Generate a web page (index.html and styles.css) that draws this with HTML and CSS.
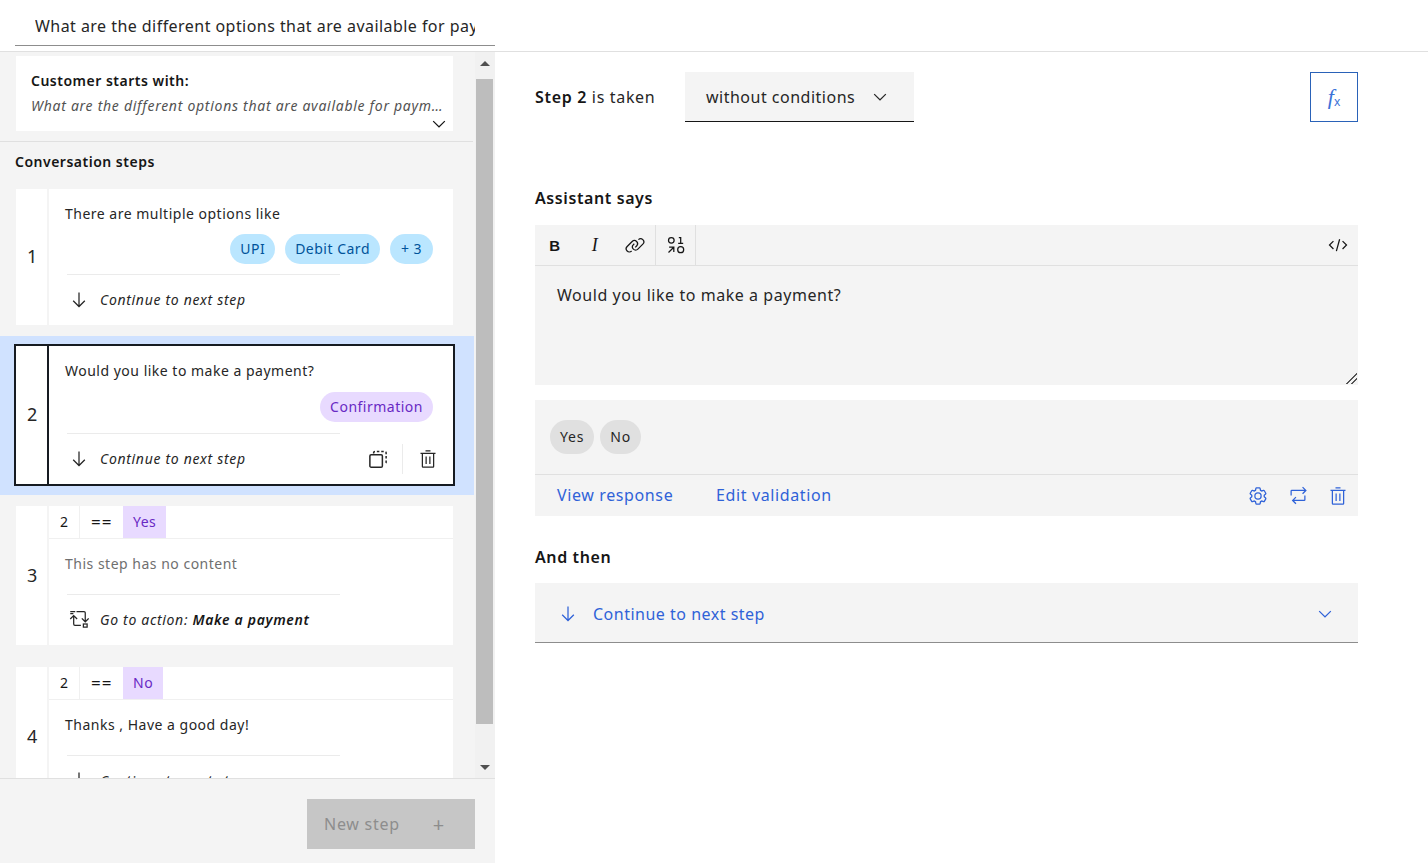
FILE: index.html
```html
<!DOCTYPE html>
<html lang="en">
<head>
<meta charset="UTF-8">
<meta name="viewport" content="width=device-width, initial-scale=1.0">
<title>Action editor</title>
<link rel="stylesheet" href="styles.css">
</head>
<body>

<svg class="icon-defs" xmlns="http://www.w3.org/2000/svg">
    <symbol id="i-arrow" viewBox="0 0 32 32"><path d="M24.59 16.59L17 24.17V4h-2v20.17l-7.59-7.58L6 18l10 10 10-10z"/></symbol>
    <symbol id="i-chevron" viewBox="0 0 32 32"><path d="M16 22L6 12l1.4-1.4 8.6 8.6 8.6-8.6L26 12z"/></symbol>
    <symbol id="i-trash" viewBox="0 0 32 32"><path d="M12 12h2v12h-2zM18 12h2v12h-2z"/><path d="M4 6v2h2v20a2 2 0 002 2h16a2 2 0 002-2V8h2V6zm4 22V8h16v20zM12 2h8v2h-8z"/></symbol>
    <symbol id="i-copy" viewBox="0 0 32 32">
        <rect x="3" y="9" width="20" height="20" rx="2" fill="none" stroke="currentColor" stroke-width="2.4"/>
        <path d="M9 7V6a2 2 0 012-2h16a2 2 0 012 2v15a2 2 0 01-2 2h-1" fill="none" stroke="currentColor" stroke-width="2.4" stroke-dasharray="4 3"/>
    </symbol>
    <symbol id="i-goto" viewBox="0 0 32 32">
        <g fill="none" stroke="currentColor" stroke-width="2">
            <path d="M2 4h8M2 7.500h5"/>
            <path d="M12 4h12a2 2 0 012 2v14M20.500 15l5.500 5.500 5.500-5.500"/>
            <path d="M7.500 10.500V24a2 2 0 002 2H19M2 16l5.500-5.500L13 16"/>
            <rect x="23" y="24" width="6" height="5"/>
        </g>
    </symbol>
    <symbol id="i-link" viewBox="0 0 32 32"><path d="M29.25 6.76a6 6 0 00-8.5 0l1.42 1.42a4 4 0 115.67 5.67l-8 8a4 4 0 11-5.67-5.66l1.41-1.42-1.41-1.42-1.42 1.42a6 6 0 000 8.5A6 6 0 0017 25a6 6 0 004.27-1.76l8-8a6 6 0 00-.02-8.48z"/><path d="M4.19 24.82a4 4 0 010-5.67l8-8a4 4 0 015.67 0A3.94 3.94 0 0119 14a4 4 0 01-1.17 2.85L15.71 19l1.42 1.42 2.12-2.12a6 6 0 00-8.51-8.51l-8 8a6 6 0 000 8.51A6 6 0 007 28a6.07 6.07 0 004.28-1.76l-1.42-1.42a4 4 0 01-5.67 0z"/></symbol>
    <symbol id="i-vars" viewBox="0 0 32 32">
        <g fill="none" stroke="currentColor" stroke-width="2">
            <circle cx="8.500" cy="8.500" r="4.500"/>
            <circle cx="23.500" cy="23.500" r="4.800"/>
            <path d="M19.500 13.500h8M23.500 13.500V4h-3"/>
            <path d="M4 28l8-8M5 19.500h7.500V27"/>
        </g>
    </symbol>
    <symbol id="i-code" viewBox="0 0 32 32"><path d="M31 16l-7 7-1.410-1.410L28.170 16l-5.580-5.590L24 9zM1 16l7-7 1.410 1.410L3.830 16l5.580 5.590L8 23zM12.420 25.480l5.220-18.930 1.930.53-5.220 18.940z"/></symbol>
    <symbol id="i-settings" viewBox="0 0 32 32"><path d="M27 16.760v-1.530l1.920-1.680A2 2 0 0029.300 11l-2.360-4a2 2 0 00-1.730-1 2 2 0 00-.64.100l-2.430.820a11.350 11.350 0 00-1.310-.750l-.510-2.520a2 2 0 00-2-1.610h-4.680a2 2 0 00-2 1.610l-.510 2.520a11.480 11.480 0 00-1.320.750L7.430 6.060A2 2 0 006.790 6a2 2 0 00-1.730 1L2.700 11a2 2 0 00.410 2.510L5 15.240v1.530l-1.890 1.680A2 2 0 002.700 21l2.360 4a2 2 0 001.730 1 2 2 0 00.640-.100l2.430-.820a11.350 11.350 0 001.310.750l.510 2.520a2 2 0 002 1.610h4.720a2 2 0 002-1.610l.510-2.520a11.480 11.480 0 001.320-.750l2.420.820a2 2 0 00.640.100 2 2 0 001.730-1l2.280-4a2 2 0 00-.410-2.510zM25.210 24l-3.430-1.160a8.860 8.860 0 01-2.710 1.570L18.360 28h-4.720l-.71-3.550a9.360 9.360 0 01-2.700-1.570L6.790 24l-2.360-4 2.720-2.400a8.900 8.900 0 010-3.130L4.430 12l2.360-4 3.430 1.160a8.860 8.860 0 012.710-1.570L13.640 4h4.720l.71 3.550a9.360 9.360 0 012.700 1.570L25.210 8l2.360 4-2.720 2.400a8.900 8.900 0 010 3.130L27.570 20z"/><path d="M16 22a6 6 0 116-6 5.940 5.940 0 01-6 6zm0-10a3.910 3.910 0 00-4 4 3.910 3.910 0 004 4 3.910 3.910 0 004-4 3.910 3.910 0 00-4-4z"/></symbol>
    <symbol id="i-repeat" viewBox="0 0 32 32"><path d="M6 6h20.170l-3.580-3.590L24 1l6 6-6 6-1.410-1.410L26.170 8H6v7H4V8a2 2 0 012-2z"/><path d="M9.830 24l3.580 3.590L12 29l-6-6 6-6 1.410 1.410L9.830 22H26v-7h2v7a2 2 0 01-2 2z"/></symbol>
</svg>

<div class="top-bar">
    <input class="title-input" type="text" value="What are the different options that are available for payment?" readonly>
</div>

<div class="page">
    <div class="left-panel">
        <div class="left-scroll">
            <div class="step-list">
                <div class="start-card">
                    <div class="start-title">Customer starts with:</div>
                    <div class="start-text">What are the different options that are available for payment?</div>
                    <svg class="icon start-chevron"><use href="#i-chevron"/></svg>
                </div>
                <h3 class="list-title">Conversation steps</h3>

                <div class="step step-first">
                    <div class="step-num">1</div>
                    <div class="step-body">
                        <p class="step-text">There are multiple options like</p>
                        <div class="chips">
                            <span class="chip chip-blue">UPI</span>
                            <span class="chip chip-blue">Debit Card</span>
                            <span class="chip chip-blue">+ 3</span>
                        </div>
                        <div class="step-action">
                            <svg class="icon"><use href="#i-arrow"/></svg>
                            <span>Continue to next step</span>
                        </div>
                    </div>
                </div>

                <div class="step-selected">
                    <div class="step">
                        <div class="step-num">2</div>
                        <div class="step-body">
                            <p class="step-text">Would you like to make a payment?</p>
                            <div class="chips">
                                <span class="chip chip-purple">Confirmation</span>
                            </div>
                            <div class="step-action">
                                <svg class="icon"><use href="#i-arrow"/></svg>
                                <span>Continue to next step</span>
                                <div class="step-tools">
                                    <svg class="icon"><use href="#i-copy"/></svg>
                                    <svg class="icon"><use href="#i-trash"/></svg>
                                </div>
                            </div>
                        </div>
                    </div>
                </div>

                <div class="step step-cond">
                    <div class="step-num">3</div>
                    <div class="step-body">
                        <div class="cond-row">
                            <span class="cond-ref">2</span>
                            <span class="cond-op">==</span>
                            <span class="cond-val">Yes</span>
                        </div>
                        <p class="step-text step-empty">This step has no content</p>
                        <div class="step-action">
                            <svg class="icon"><use href="#i-goto"/></svg>
                            <span>Go to action: <b>Make a payment</b></span>
                        </div>
                    </div>
                </div>

                <div class="step step-cond">
                    <div class="step-num">4</div>
                    <div class="step-body">
                        <div class="cond-row">
                            <span class="cond-ref">2</span>
                            <span class="cond-op">==</span>
                            <span class="cond-val">No</span>
                        </div>
                        <p class="step-text">Thanks , Have a good day!</p>
                        <div class="step-action">
                            <svg class="icon"><use href="#i-arrow"/></svg>
                            <span>Continue to next step</span>
                        </div>
                    </div>
                </div>
            </div>

            <div class="scrollbar">
                <div class="scroll-btn"><span class="tri-up"></span></div>
                <div class="scroll-thumb"></div>
                <div class="scroll-btn"><span class="tri-down"></span></div>
            </div>
        </div>

        <div class="left-footer">
            <button class="new-step" disabled>New step <span class="plus">+</span></button>
        </div>
    </div>

    <div class="right-panel">
        <div class="taken-row">
            <span class="taken-label"><b>Step 2</b> is taken</span>
            <div class="condition-select">
                <span>without conditions</span>
                <svg class="icon"><use href="#i-chevron"/></svg>
            </div>
            <button class="fx-btn"><i>f</i><sub>x</sub></button>
        </div>

        <h2 class="section-title says-title">Assistant says</h2>
        <div class="toolbar">
            <span class="tool tool-bold">B</span>
            <span class="tool tool-italic">I</span>
            <span class="tool"><svg class="icon"><use href="#i-link"/></svg></span>
            <span class="tool tool-vars"><svg class="icon"><use href="#i-vars"/></svg></span>
            <span class="tool tool-code"><svg class="icon"><use href="#i-code"/></svg></span>
        </div>
        <div class="editor">
            Would you like to make a payment?
            <span class="resize-grip"></span>
        </div>

        <div class="options-box">
            <div class="option-chips">
                <span class="option">Yes</span>
                <span class="option">No</span>
            </div>
            <div class="option-links">
                <a class="text-link">View response</a>
                <a class="text-link">Edit validation</a>
                <div class="link-icons">
                    <svg class="icon"><use href="#i-settings"/></svg>
                    <svg class="icon"><use href="#i-repeat"/></svg>
                    <svg class="icon"><use href="#i-trash"/></svg>
                </div>
            </div>
        </div>

        <h2 class="section-title then-title">And then</h2>
        <div class="then-select">
            <svg class="icon"><use href="#i-arrow"/></svg>
            <span>Continue to next step</span>
            <svg class="icon then-chevron"><use href="#i-chevron"/></svg>
        </div>
    </div>
</div>

</body>
</html>
```

FILE: styles.css
```css
* {
    box-sizing: border-box;
}
body {
    margin: 0;
    height: 100vh;
    overflow: hidden;
    background-color: #fff;
    color: #161616;
    font-family: "Noto Sans", Roboto, sans-serif;
    font-size: 14px;
    letter-spacing: 0.5px;
}
.icon-defs {
    display: none;
}
.icon {
    width: 20px;
    height: 20px;
    fill: currentColor;
    flex: none;
}

/* top bar */
.top-bar {
    height: 52px;
    padding-left: 15px;
    border-bottom: 1px solid #e0e0e0;
}
.title-input {
    display: block;
    width: 480px;
    height: 46px;
    padding: 6px 20px 0;
    border: none;
    border-bottom: 1px solid #8d8d8d;
    outline: none;
    color: #262626;
    font-family: inherit;
    font-size: 16px;
    letter-spacing: 0.45px;
}

.page {
    display: flex;
    height: 811px;
}

/* left side */
.left-panel {
    width: 495px;
    display: flex;
    flex-direction: column;
    background-color: #f4f4f4;
}
.left-scroll {
    display: flex;
    height: 726px;
    overflow: hidden;
}
.step-list {
    width: 475px;
    padding-top: 4px;
    overflow: hidden;
}
.start-card {
    position: relative;
    width: 437px;
    height: 75px;
    margin-left: 16px;
    padding: 16px 6px 0 15px;
    background-color: #fff;
}
.start-title {
    font-weight: 600;
    line-height: 18px;
}
.start-text {
    margin-top: 7px;
    color: #525252;
    font-style: italic;
    line-height: 18px;
    letter-spacing: 0.72px;
    white-space: nowrap;
    overflow: hidden;
    text-overflow: ellipsis;
}
.start-chevron {
    position: absolute;
    right: 4px;
    bottom: -3px;
}
.list-title {
    margin: 10px 2px 0 0;
    padding: 11px 0 0 15px;
    height: 48px;
    border-top: 1px solid #e0e0e0;
    font-size: 14px;
    font-weight: 600;
    line-height: 18px;
}
.step {
    display: flex;
    width: 437px;
    margin-left: 16px;
    background-color: #fff;
}
.step-num {
    width: 33px;
    flex: none;
    display: flex;
    align-items: center;
    padding: 0 0 2px 11px;
    border-right: 2px solid #f4f4f4;
    font-size: 18px;
    color: #262626;
}
.step-body {
    flex: 1;
    min-width: 0;
}
.step-text {
    margin: 16px 0 0 16px;
    line-height: 18px;
    color: #262626;
}
.step-empty {
    color: #6f6f6f;
}
.chips {
    display: flex;
    justify-content: flex-end;
    gap: 10px;
    margin: 12px 20px 9px 0;
}
.step-first .chips {
    margin: 11px 20px 10px 0;
}
.chip {
    height: 30px;
    padding: 0 10px;
    border-radius: 15px;
    line-height: 29px;
    text-align: center;
}
.chip-blue {
    min-width: 43px;
    background-color: #bae6ff;
    color: #00539a;
}
.chip-purple {
    background-color: #e8daff;
    color: #6929c4;
}
.step-action {
    position: relative;
    display: flex;
    align-items: center;
    height: 50px;
    margin-left: 18px;
    padding-left: 2px;
    font-style: italic;
    letter-spacing: 0.68px;
    color: #262626;
}
.step-first .step-action, .step-selected .step-action {
    height: 51px;
}
.step-action > span {
    margin-left: 11px;
}
.step-action::before {
    content: "";
    position: absolute;
    top: 0;
    left: 0;
    width: 273px;
    border-top: 1px solid #ebebeb;
}
.step-action b {
    font-weight: 600;
    color: #161616;
}
.step-tools {
    display: flex;
    align-items: center;
    gap: 30px;
    height: 30px;
    margin-left: auto;
    margin-right: 15px;
    background: linear-gradient(#ebebeb, #ebebeb) 34px 0 / 1px 100% no-repeat;
}

.step-selected {
    width: 474px;
    margin: 11px 0;
    padding: 10px 0 11px;
    background-color: #d0e2ff;
}
.step-selected .step {
    outline: 2px solid #161b22;
}
.step-selected .step-num {
    border-right-color: #161b22;
}
.step-selected .chips {
    margin-bottom: 11px;
}

.step-cond {
    height: 139px;
    margin-bottom: 22px;
}
.cond-row {
    display: flex;
    align-items: flex-start;
    height: 33px;
    border-bottom: 1px solid #f0f0f0;
    line-height: 31px;
}
.cond-ref {
    width: 31px;
    height: 32px;
    padding-left: 11px;
    border-right: 1px solid #f0f0f0;
}
.cond-op {
    width: 43px;
    padding-left: 11px;
    font-size: 17px;
    letter-spacing: 1px;
}
.cond-val {
    height: 32px;
    padding: 0 10px;
    background-color: #e8daff;
    color: #6929c4;
}
.step-cond .step-text {
    margin-top: 16px;
    margin-bottom: 21px;
}

.scrollbar {
    width: 20px;
    display: flex;
    flex-direction: column;
    background-color: #f1f1f1;
}
.scroll-btn {
    height: 27px;
    display: flex;
    align-items: flex-start;
    justify-content: center;
    padding-top: 9px;
}
.scroll-btn:last-child {
    height: 54px;
    padding-top: 41px;
}
.scroll-thumb {
    height: 645px;
    width: 17px;
    margin-left: 1px;
    background-color: #bdbdbd;
}
.tri-up, .tri-down {
    width: 0;
    height: 0;
    border-left: 5px solid transparent;
    border-right: 5px solid transparent;
}
.tri-up {
    border-bottom: 5px solid #505050;
}
.tri-down {
    border-top: 5px solid #505050;
}

.left-footer {
    flex: 1;
    display: flex;
    justify-content: flex-end;
    padding: 20px 20px 0 0;
    border-top: 1px solid #e0e0e0;
}
.new-step {
    display: flex;
    justify-content: space-between;
    align-items: center;
    width: 168px;
    height: 50px;
    padding: 0 30px 0 17px;
    border: none;
    background-color: #c6c6c6;
    color: #8d8d8d;
    font-family: inherit;
    font-size: 16px;
    letter-spacing: 0.75px;
}
.plus {
    font-size: 20px;
}

/* right side */
.right-panel {
    flex: 1;
    min-width: 0;
    padding: 20px 70px 0 40px;
    font-size: 16px;
}
.taken-row {
    display: flex;
    align-items: center;
    height: 50px;
}
.taken-label {
    width: 150px;
    color: #262626;
    letter-spacing: 0.67px;
}
.taken-label b {
    font-weight: 600;
    color: #161616;
}
.condition-select {
    display: flex;
    align-items: center;
    justify-content: space-between;
    width: 229px;
    height: 50px;
    padding: 0 24px 0 21px;
    background-color: #f4f4f4;
    border-bottom: 1px solid #161616;
    color: #262626;
}
.fx-btn {
    margin-left: auto;
    width: 48px;
    height: 50px;
    padding: 0;
    border: 1px solid #2a62b8;
    background-color: #fff;
    color: #3a72d8;
    font-family: "Liberation Serif", serif;
    font-size: 22px;
}
.fx-btn sub {
    font-family: "Noto Sans", sans-serif;
    font-size: 12px;
    vertical-align: -2px;
}
.section-title {
    margin: 0;
    font-size: 16px;
    font-weight: 600;
    line-height: 20px;
    letter-spacing: 0.6px;
}
.says-title {
    margin-top: 66px;
}
.toolbar {
    display: flex;
    height: 41px;
    margin-top: 17px;
    background-color: #f4f4f4;
    border-bottom: 1px solid #e0e0e0;
}
.tool {
    width: 40px;
    height: 40px;
    display: flex;
    align-items: center;
    justify-content: center;
}
.tool-bold {
    font-family: "Liberation Sans", sans-serif;
    font-weight: 700;
    font-size: 15px;
}
.tool-italic {
    font-family: "Liberation Serif", serif;
    font-style: italic;
    font-size: 18px;
}
.tool-vars {
    width: 41px;
    border-left: 1px solid #e0e0e0;
    border-right: 1px solid #e0e0e0;
}
.tool-code {
    margin-left: auto;
}
.editor {
    position: relative;
    height: 119px;
    padding: 19px 22px;
    background-color: #f4f4f4;
    line-height: 20px;
    letter-spacing: 0.55px;
    color: #262626;
}
.resize-grip {
    position: absolute;
    right: 1px;
    bottom: 1px;
    width: 11px;
    height: 11px;
    background: linear-gradient(135deg, transparent 48%, #555 48%, #555 58%, transparent 58%, transparent 70%, #555 70%, #555 80%, transparent 80%);
}
.options-box {
    margin-top: 15px;
    background-color: #f4f4f4;
}
.option-chips {
    display: flex;
    gap: 6px;
    height: 75px;
    padding: 20px 0 0 15px;
    border-bottom: 1px solid #e0e0e0;
    font-size: 14px;
}
.option {
    height: 34px;
    padding: 0 10px;
    border-radius: 17px;
    background-color: #e0e0e0;
    color: #262626;
    line-height: 33px;
    letter-spacing: 0.8px;
}
.option-links {
    display: flex;
    align-items: center;
    height: 41px;
    padding: 0 10px 0 22px;
    color: #2f62d8;
    letter-spacing: 0.62px;
}
.text-link {
    width: 159px;
    margin-bottom: 2px;
}
.link-icons {
    display: flex;
    gap: 20px;
    margin-left: auto;
}
.then-title {
    margin-top: 31px;
}
.then-select {
    display: flex;
    align-items: center;
    height: 60px;
    margin-top: 16px;
    padding: 2px 23px 0;
    background-color: #f4f4f4;
    border-bottom: 1px solid #8d8d8d;
    color: #2f62d8;
}
.then-select > span {
    margin-left: 15px;
}
.then-chevron {
    margin-left: auto;
}
```
